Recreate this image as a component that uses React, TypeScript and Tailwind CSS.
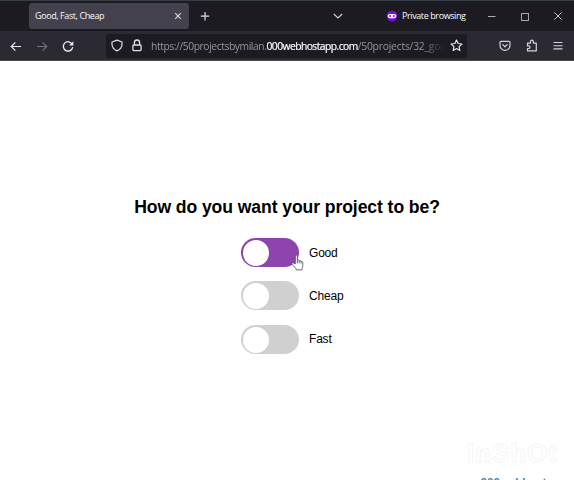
import React from "react";

const uiFont = "font-['Open_Sans','Noto_Sans',sans-serif]";

function TabBar() {
  return (
    <div className="flex h-[31px] items-center border-t border-[#363f45] bg-[#1c1b22] text-[#fbfbfe]">
      <div className="ml-[29px] flex h-[26px] w-[160px] items-center justify-between rounded-[3px] bg-[#42414d] pl-[6px] pr-[7px]">
        <span className="whitespace-nowrap text-[9px] tracking-[-0.41px]">Good, Fast, Cheap</span>
        <svg width="8" height="8" viewBox="0 0 8 8" fill="none" stroke="#dddde3" strokeWidth="1.1">
          <path d="M1.2 1.2 6.8 6.8M6.8 1.2 1.2 6.8" />
        </svg>
      </div>
      <svg className="ml-[11px] shrink-0" width="10" height="10" viewBox="0 0 10 10" fill="none" stroke="#dedee3" strokeWidth="1.2">
        <path d="M5 1v8.4M.8 5.2h8.4" />
      </svg>
      <svg className="ml-[123px] shrink-0" width="10" height="8" viewBox="0 0 10 8" fill="none" stroke="#cfcfd5" strokeWidth="1.2">
        <path d="m.8 2 4.2 4 4.2-4" />
      </svg>
      <svg className="ml-[43px] shrink-0" width="12" height="12" viewBox="0 0 12 12">
        <circle cx="6" cy="6" r="5.4" fill="#7a0bd6" />
        <rect x="1.7" y="4" width="8.6" height="4.2" rx="2.1" fill="#fff" />
        <circle cx="4.1" cy="6.1" r="1" fill="#7a0bd6" />
        <circle cx="7.9" cy="6.1" r="1" fill="#7a0bd6" />
      </svg>
      <span className="ml-[4px] w-[66px] whitespace-nowrap text-[9px] tracking-[-0.4px]">Private browsing</span>
      <svg className="ml-[19px] shrink-0" width="9" height="9" viewBox="0 0 9 9" stroke="#aaaab0" strokeWidth="1">
        <path d="M1 4.5h7.5" />
      </svg>
      <svg className="ml-[24px] shrink-0" width="9" height="9" viewBox="0 0 9 9" fill="none" stroke="#a6a6ad" strokeWidth="1">
        <rect x="1.5" y="1.5" width="7" height="7" />
      </svg>
      <svg className="ml-[24px] shrink-0" width="10" height="10" viewBox="0 0 10 10" fill="none" stroke="#c3c3ca" strokeWidth="1">
        <path d="m1.3 1.3 7.4 7.4M8.7 1.3 1.3 8.7" />
      </svg>
    </div>
  );
}

function AddressBar() {
  return (
    <div className="flex h-[30px] items-center border-b border-[#47464e] bg-[#2b2a33]">
      <svg className="ml-[10px] shrink-0" width="12" height="12" viewBox="0 0 12 12" fill="none" stroke="#ededf2" strokeWidth="1.2">
        <path d="M11 6.5H1.4M5.4 2.3 1.2 6.5l4.2 4.2" />
      </svg>
      <svg className="ml-[14px] shrink-0" width="12" height="12" viewBox="0 0 12 12" fill="none" stroke="#74737b" strokeWidth="1.1">
        <path d="M1 6.5h9.6M6.6 2.3l4.2 4.2-4.2 4.2" />
      </svg>
      <svg className="ml-[14px] shrink-0" width="12" height="12" viewBox="0 0 12 12" fill="none" stroke="#ededf2" strokeWidth="1.3">
        <path d="M10.2 4.2A4.7 4.7 0 1 0 10.7 7.2" />
        <path d="M11.3 1.2v4.2H7.1z" fill="#ededf2" stroke="none" />
      </svg>
      <div className="ml-[32px] flex h-[24px] w-[361px] items-center rounded-[3px] bg-[#1c1b22]">
        <svg className="ml-[5px] shrink-0" width="12" height="13" viewBox="0 0 12 13" fill="none" stroke="#e0e0e5" strokeWidth="1.2" strokeLinejoin="round">
          <path d="M6 1.1 11 3v2.3c0 3-1.8 5.2-5 6.6-3.2-1.4-5-3.6-5-6.6V3z" />
        </svg>
        <svg className="ml-[9px] shrink-0" width="10" height="13" viewBox="0 0 10 13" fill="none" stroke="#e0e0e5" strokeWidth="1.3">
          <path d="M2.4 6V3.6a2.6 2.6 0 0 1 5.2 0V6" />
          <rect x=".9" y="6" width="8.2" height="5.6" rx="1" />
        </svg>
        <div className="ml-[9px] mt-[2px] w-[294px] overflow-hidden whitespace-nowrap text-[10.3px] tracking-[-0.42px] text-[#96959e] [mask-image:linear-gradient(to_right,black_92%,transparent)]">
          https://50projectsbymilan.<span className="tracking-[-0.55px] text-[#fbfbfe] [-webkit-text-stroke:0.2px_#fbfbfe]">000webhostapp.com</span><span className="tracking-[-0.2px]">/50projects/32_goo</span>
        </div>
        <svg className="ml-[5px] shrink-0" width="13" height="13" viewBox="0 0 13 13" fill="none" stroke="#e4e4e9" strokeWidth="1.2" strokeLinejoin="round">
          <path d="m6.5 1.1 1.6 3.4 3.8.5-2.8 2.6.7 3.8-3.3-1.9-3.3 1.9.7-3.8L1.1 5l3.8-.5z" />
        </svg>
      </div>
      <svg className="ml-[32px] shrink-0" width="12" height="12" viewBox="0 0 12 12" fill="none" stroke="#d2d2d8" strokeWidth="1.2" strokeLinecap="round" strokeLinejoin="round">
        <path d="M2 1.4h8a1 1 0 0 1 1 1v3a5 5 0 0 1-10 0v-3a1 1 0 0 1 1-1Z" />
        <path d="m3.7 4.6 2.3 2.2 2.3-2.2" />
      </svg>
      <svg className="ml-[15px] shrink-0" width="12" height="13" viewBox="0 0 12 13" fill="none" stroke="#d2d2d8" strokeWidth="1.2" strokeLinejoin="round">
        <path d="M1.5 4.1h3V2.5a1.4 1.4 0 0 1 2.8 0v1.6h3v7.8H1.5V9.5h1.2a1.3 1.3 0 0 0 0-2.6H1.5z" />
      </svg>
      <svg className="ml-[15px] shrink-0" width="10" height="10" viewBox="0 0 10 10" stroke="#d2d2d8" strokeWidth="1.1">
        <path d="M.5 1.5h9M.5 4.7h9M.5 7.9h9" />
      </svg>
    </div>
  );
}

function HandCursor() {
  return (
    <svg className="absolute left-[50px] top-[16px]" width="13" height="17" viewBox="0 0 13 17" fill="#fff" stroke="#4b4855" strokeWidth=".85" strokeLinejoin="round">
      <path d="M4.3 10V2.1c0-1.5 2-1.5 2 0v4.2c.6-.7 1.8-.4 1.9.5.7-.6 1.8-.2 1.9.7.8-.4 1.7.1 1.7 1v3.2c0 1.7-.9 2.2-1 4.2H5.4c-.3-1.9-2.6-3.5-4.3-5.7-.8-1.1.6-2 1.5-1.2z" />
      <path d="M6.3 6.3v3M8.2 6.8v2.5M10.1 7.5v2" fill="none" />
    </svg>
  );
}

function Toggle({ label, active = false }: { label: string; active?: boolean }) {
  return (
    <div className="flex h-[29px] items-center">
      <div
        role="switch"
        aria-checked={active}
        aria-label={label}
        className={`relative flex h-[29px] w-[58px] items-center rounded-full pl-[2px] ${active ? "bg-[#8e44ad]" : "bg-[#d0d0d0]"}`}
      >
        <div className="mt-px size-[26px] rounded-full bg-white" />
        {active && <HandCursor />}
      </div>
      <span className="ml-[10.5px] text-[12px] tracking-[-0.2px] text-black">{label}</span>
    </div>
  );
}

export default function App() {
  return (
    <div className="flex h-[480px] w-[574px] flex-col overflow-hidden bg-white">
      <header className={uiFont}>
        <TabBar />
        <AddressBar />
      </header>
      <main className="relative flex-1 overflow-hidden font-['Liberation_Sans',Arial,sans-serif]">
        <h2 className="mt-[135px] text-center text-[17.6px] font-bold leading-[22px] tracking-[-0.09px] text-black">
          How do you want your project to be?
        </h2>
        <div className="ml-[240.5px] mt-[20px] flex flex-col gap-[14.4px]">
          <Toggle label="Good" active />
          <Toggle label="Cheap" />
          <Toggle label="Fast" />
        </div>
        <div className="absolute left-[467px] top-[377px] text-[26px] font-bold leading-[30px] tracking-[0.9px] text-white [-webkit-text-stroke:1px_#f6f6f6]">
          InShOt
        </div>
        <div className="absolute left-[451px] top-[414px] whitespace-nowrap text-[11.5px] font-bold leading-[14px] text-[#3f82b9]">
          <span className="text-[#f5f8fa]">www.</span>000webhost.com
        </div>
      </main>
    </div>
  );
}
